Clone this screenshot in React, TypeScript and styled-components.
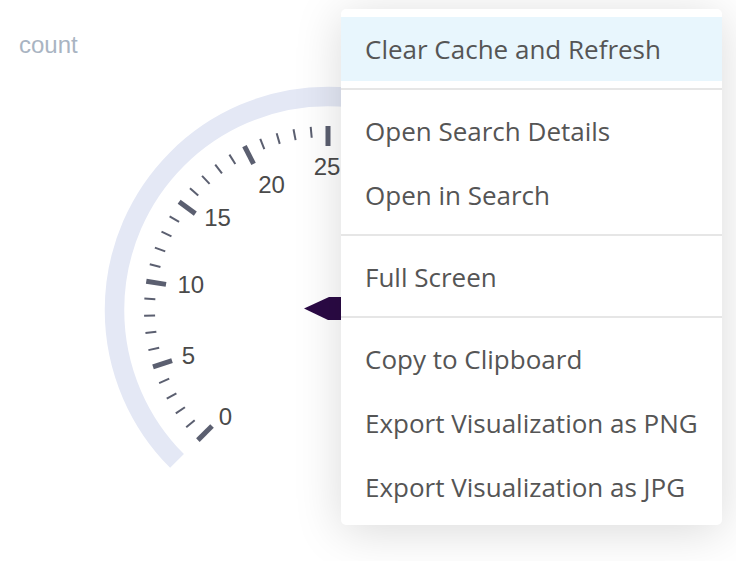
import styled, { createGlobalStyle } from "styled-components";

const GlobalStyle = createGlobalStyle`
  html, body {
    margin: 0;
    padding: 0;
    background: #fff;
    overflow: hidden;
  }
`;

const Page = styled.div`
  position: relative;
  width: 736px;
  height: 561px;
  overflow: hidden;
`;

const Panel = styled.div`
  display: flex;
  flex-direction: column;
`;

const Title = styled.div`
  padding: 31px 0 0 19px;
  height: 28px;
  line-height: 28px;
  font-family: "Liberation Sans", Arial, sans-serif;
  font-size: 24px;
  color: #a9b4c2;
`;

const Chart = styled.svg`
  display: block;
`;

const Menu = styled.ul`
  position: absolute;
  top: 9px;
  left: 341px;
  width: 381px;
  margin: 0;
  padding: 8px 0 6px;
  list-style: none;
  background: #fff;
  border-radius: 5px;
  box-shadow: 0 6px 48px rgba(0, 0, 0, 0.15);
`;

const Item = styled.li<{ $active?: boolean }>`
  height: 64px;
  line-height: 64px;
  padding: 0 24px;
  font-family: "Open Sans", "Noto Sans", sans-serif;
  font-size: 26px;
  color: #555;
  background: ${(p) => (p.$active ? "#e8f6fd" : "transparent")};
  white-space: nowrap;
  cursor: pointer;
`;

const Divider = styled.li`
  height: 2px;
  margin: 7px 0 9px;
  background: #e6e6e6;
`;

const CX = 328;
const CY = 310;

const polar = (r: number, deg: number) => {
  const a = (deg * Math.PI) / 180;
  return { x: CX + r * Math.sin(a), y: CY - r * Math.cos(a) };
};

const angleOf = (v: number) => -135 + v * 5.4;

const ARC_R = 213.5;
const arcStart = polar(ARC_R, -135);
const arcEnd = polar(ARC_R, 135);

const ticks = Array.from({ length: 51 }, (_, v) => v);

const labels = [
  { v: 0, x: 225.5, y: 416.7 },
  { v: 5, x: 188.5, y: 355 },
  { v: 10, x: 190.8, y: 284 },
  { v: 15, x: 217.5, y: 217.5 },
  { v: 20, x: 271.5, y: 184 },
  { v: 25, x: 327, y: 166.5 },
];

function Gauge() {
  return (
    <Chart width={736} height={502} viewBox="0 59 736 502">
      <path
        d={`M ${arcStart.x} ${arcStart.y} A ${ARC_R} ${ARC_R} 0 1 1 ${arcEnd.x} ${arcEnd.y}`}
        fill="none"
        stroke="#e4e8f5"
        strokeWidth={19.5}
      />
      {ticks.map((v) => {
        const major = v % 5 === 0;
        const a = polar(major ? 164 : 173, angleOf(v));
        const b = polar(184, angleOf(v));
        return (
          <line
            key={v}
            x1={a.x}
            y1={a.y}
            x2={b.x}
            y2={b.y}
            stroke="#5b5f70"
            strokeWidth={major ? 5 : 2}
          />
        );
      })}
      {labels.map((l) => (
        <text
          key={l.v}
          x={l.x}
          y={l.y}
          textAnchor="middle"
          dominantBaseline="central"
          fontFamily="'Liberation Sans', Arial, sans-serif"
          fontSize={24}
          fill="#4a4a4a"
        >
          {l.v}
        </text>
      ))}
      <polygon
        points="304,308.5 329,297 360,297 360,320 328,320"
        fill="#2b0a45"
      />
    </Chart>
  );
}

const items: (string | null)[] = [
  "Clear Cache and Refresh",
  null,
  "Open Search Details",
  "Open in Search",
  null,
  "Full Screen",
  null,
  "Copy to Clipboard",
  "Export Visualization as PNG",
  "Export Visualization as JPG",
];

export default function App() {
  return (
    <Page>
      <GlobalStyle />
      <Panel>
        <Title>count</Title>
        <Gauge />
      </Panel>
      <Menu>
        {items.map((label, i) =>
          label ? (
            <Item key={i} $active={i === 0}>
              {label}
            </Item>
          ) : (
            <Divider key={i} />
          )
        )}
      </Menu>
    </Page>
  );
}
